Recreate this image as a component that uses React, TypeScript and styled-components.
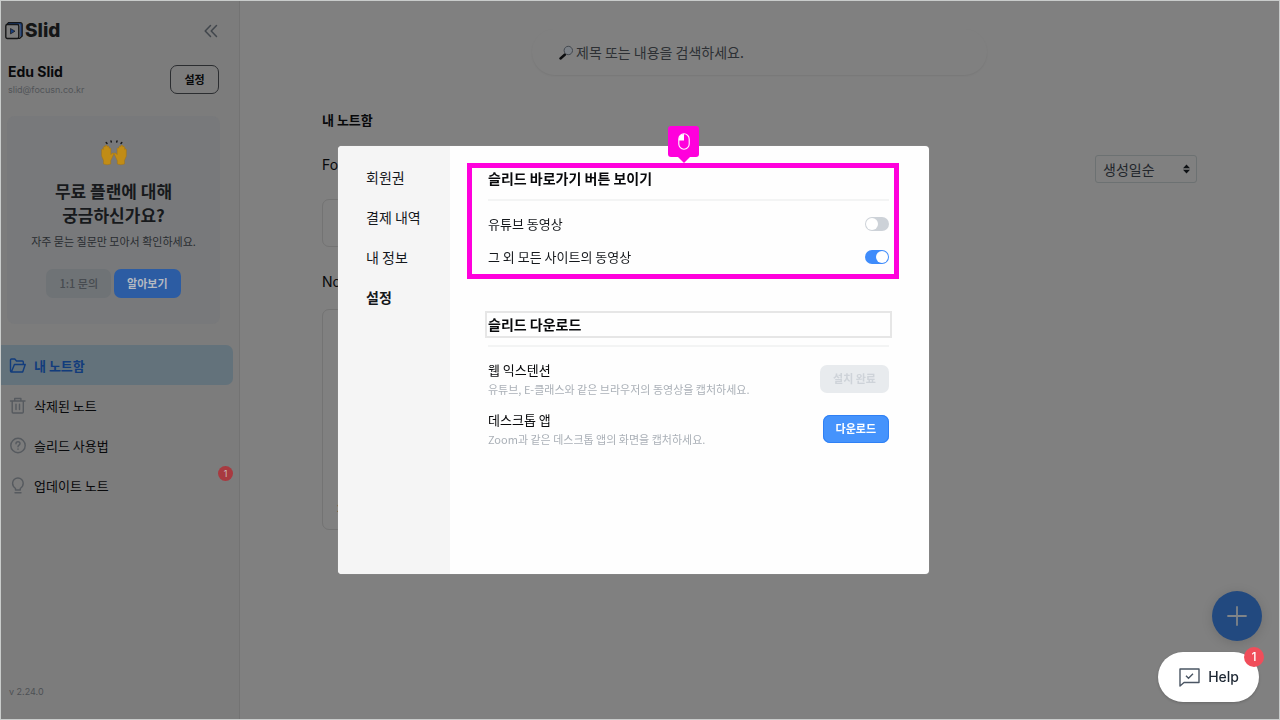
import React from "react";
import styled, { createGlobalStyle, css } from "styled-components";

const latin = `Inter, "Noto Sans CJK KR", sans-serif`;
const korean = `"Noto Sans CJK KR", Inter, sans-serif`;

const GlobalStyle = createGlobalStyle`
  *, *::before, *::after { box-sizing: border-box; }
  body { margin: 0; font-family: ${korean}; color: #08090b; background: #808080; }
  button, input, select { font-family: inherit; margin: 0; }
  button { cursor: pointer; }
  h1, h2, h3, p, ul { margin: 0; padding: 0; }
  ul { list-style: none; }
  a { color: inherit; text-decoration: none; }
  svg { display: block; flex: none; }
`;

const Page = styled.div`
  display: flex;
  min-height: 100vh;
  border: 1px solid #c9cccb;
  background: #808080;
`;

const Sidebar = styled.aside`
  display: flex;
  flex-direction: column;
  flex: none;
  width: 239px;
  background: #7c7c7c;
  border-right: 1px solid #737373;
`;

const BrandRow = styled.header`
  display: flex;
  align-items: center;
  justify-content: space-between;
  padding: 18px 21px 0 4px;
  height: 42px;
`;

const Brand = styled.a`
  display: flex;
  align-items: center;
  gap: 2px;
  font: 800 19px/24px ${latin};
  color: #151617;
`;

const IconButton = styled.button`
  display: flex;
  padding: 0;
  border: 0;
  background: none;
`;

const Profile = styled.section`
  display: flex;
  align-items: center;
  justify-content: space-between;
  padding: 19px 20px 0 7px;
`;

const ProfileName = styled.h2`
  font: 700 14px/20px ${latin};
`;

const ProfileMail = styled.p`
  font: 400 9px/15px ${latin};
  color: #515458;
`;

const SettingsButton = styled.button`
  width: 49px;
  height: 29px;
  padding: 0 0 2px;
  border: 1px solid #2b2d30;
  border-radius: 7px;
  background: none;
  color: #08090b;
  font-size: 11px;
  font-weight: 700;
`;

const Promo = styled.section`
  display: flex;
  flex-direction: column;
  align-items: center;
  margin: 19px 19px 0 6px;
  padding: 24px 0 26px;
  border-radius: 8px;
  background: #78797b;
`;

const PromoTitle = styled.h2`
  margin-top: 13px;
  font-size: 17px;
  font-weight: 700;
  line-height: 24px;
  text-align: center;
  color: #17191c;
`;

const PromoText = styled.p`
  margin-top: 4px;
  font-size: 11px;
  line-height: 20px;
  color: #292c30;
`;

const PromoActions = styled.div`
  display: flex;
  gap: 3px;
  margin-top: 18px;
`;

const PromoButton = styled.button<{ $primary?: boolean }>`
  height: 29px;
  padding: 0 13px 2px;
  border: 0;
  border-radius: 7px;
  background: ${(p) => (p.$primary ? "#2c5ca3" : "#6f7376")};
  color: ${(p) => (p.$primary ? "#b4b9c1" : "#474b50")};
  font-size: 11px;
  font-weight: ${(p) => (p.$primary ? 700 : 500)};
`;

const SideNav = styled.ul`
  margin: 21px 6px 0 0;
`;

const SideItem = styled.li`
  position: relative;
`;

const SideLink = styled.a<{ $active?: boolean }>`
  display: flex;
  align-items: center;
  gap: 8px;
  height: 40px;
  padding-left: 8px;
  border-radius: 0 7px 7px 0;
  font-size: 13px;
  ${(p) =>
    p.$active &&
    css`
      background: #63727b;
      color: #123c7c;
      font-weight: 700;
    `}
`;

const SideIcon = styled.svg`
  width: 17px;
  height: 17px;
  fill: none;
  stroke: currentColor;
  stroke-width: 1.4;
  stroke-linecap: round;
  stroke-linejoin: round;
`;

const MutedIcon = styled(SideIcon)`
  stroke: #565a5f;
`;

const Badge = styled.span<{ $large?: boolean }>`
  position: absolute;
  display: flex;
  align-items: center;
  justify-content: center;
  border-radius: 50%;
  font-family: ${latin};
  ${(p) =>
    p.$large
      ? css`
          top: -5px;
          right: -5px;
          width: 20px;
          height: 20px;
          font-size: 12px;
          background: #f04d5a;
          color: #fff;
        `
      : css`
          top: 1px;
          right: 0;
          width: 15px;
          height: 15px;
          font-size: 9px;
          background: #a83a40;
          color: #c9bdbe;
        `}
`;

const Version = styled.p`
  margin-top: auto;
  padding: 0 8px 20px;
  font: 400 9px/14px ${latin};
  color: #4d5054;
`;

const Main = styled.main`
  flex: 1;
  min-width: 0;
  padding: 28px 82px 0;
`;

const SearchBox = styled.label`
  display: flex;
  align-items: center;
  gap: 2px;
  width: 455px;
  max-width: 100%;
  height: 46px;
  margin: 0 auto;
  padding: 0 27px;
  border-radius: 23px;
  box-shadow: 0 1px 2px rgba(0, 0, 0, 0.07);
`;

const SearchInput = styled.input`
  flex: 1;
  min-width: 0;
  padding: 0;
  border: 0;
  outline: 0;
  background: none;
  font-size: 14px;
  line-height: 20px;
  color: #2d3034;
  &::placeholder {
    color: #2d3034;
    opacity: 1;
  }
`;

const PageTitle = styled.h1`
  margin-top: 35px;
  font-size: 13px;
  font-weight: 700;
  line-height: 20px;
`;

const GroupHead = styled.div`
  display: flex;
  align-items: flex-start;
  justify-content: space-between;
  height: 28px;
  margin-top: 25px;
`;

const GroupTitle = styled.h2`
  font: 400 14px/20px ${latin};
`;

const SortField = styled.label`
  position: relative;
  display: flex;
  align-items: center;
`;

const SortSelect = styled.select`
  appearance: none;
  width: 102px;
  height: 28px;
  padding: 0 20px 0 7px;
  border: 1px solid #6c7172;
  border-radius: 3px;
  background: none;
  font-size: 14px;
  color: #22262b;
`;

const SortArrows = styled.svg`
  position: absolute;
  right: 7px;
  pointer-events: none;
`;

const Card = styled.article<{ $tall?: boolean }>`
  display: flex;
  align-items: flex-end;
  width: 190px;
  height: ${(p) => (p.$tall ? 221 : 48)}px;
  margin-top: ${(p) => (p.$tall ? 9 : 16)}px;
  padding: 14px;
  border: 1px solid #737373;
  border-radius: 7px;
  font: 400 10px/14px ${latin};
`;

const Floating = styled.div`
  position: fixed;
  right: 18px;
  bottom: 18px;
  display: flex;
  flex-direction: column;
  align-items: flex-end;
  gap: 11px;
`;

const AddButton = styled.button`
  display: flex;
  align-items: center;
  justify-content: center;
  width: 50px;
  height: 50px;
  padding: 0;
  border: 0;
  border-radius: 50%;
  background: #22497f;
  box-shadow: 0 2px 12px rgba(0, 0, 0, 0.14);
`;

const HelpButton = styled.button`
  position: relative;
  display: flex;
  align-items: center;
  gap: 8px;
  height: 50px;
  margin-right: 3px;
  padding: 0 20px 0 21px;
  border: 0;
  border-radius: 25px;
  background: #fff;
  box-shadow: 0 1px 3px rgba(0, 0, 0, 0.2);
  font: 500 14px/20px ${latin};
  color: #1d2733;
`;

const ModalLayer = styled.div`
  position: fixed;
  inset: 0;
  display: flex;
  align-items: center;
  justify-content: center;
  padding-right: 13px;
`;

const Modal = styled.div`
  display: flex;
  width: 591px;
  min-height: 428px;
  border-radius: 4px;
  background: #fefefe;
  box-shadow: 0 0 1px #b0b0b0;
`;

const ModalNav = styled.nav`
  width: 112px;
  padding: 11px 0 0 28px;
  border-radius: 4px 0 0 4px;
  background: #f5f5f5;
`;

const ModalLink = styled.a<{ $active?: boolean }>`
  display: block;
  font-size: 14px;
  line-height: 40px;
  color: #15181c;
  font-weight: ${(p) => (p.$active ? 700 : 400)};
`;

const ModalBody = styled.div`
  flex: 1;
  padding: 21px 40px 22px 38px;
`;

const Section = styled.section`
  position: relative;
`;

const SectionTitle = styled.h2`
  font-size: 14px;
  font-weight: 700;
  line-height: 22px;
  padding-bottom: 10px;
`;

const OutlinedTitle = styled.h2`
  margin: 44px -3px 7px;
  border: 2px solid #e6e6e6;
  padding: 0 0 1px 1px;
  font-size: 14px;
  font-weight: 700;
  line-height: 22px;
`;

const Rule = styled.hr`
  height: 2px;
  margin: 0 0 13px;
  border: 0;
  background: #f3f4f4;
`;

const ToggleRow = styled.label`
  display: flex;
  align-items: center;
  justify-content: space-between;
  font-size: 13px;
  line-height: 20px;
  color: #15181c;
  & + & {
    margin-top: 13px;
  }
`;

const Toggle = styled.input`
  appearance: none;
  display: flex;
  align-items: center;
  width: 24px;
  height: 14px;
  margin: 0;
  padding: 0 1px;
  border-radius: 7px;
  background: #cdd2d8;
  &::before {
    content: "";
    width: 12px;
    height: 12px;
    border-radius: 50%;
    background: #fff;
  }
  &:checked {
    justify-content: flex-end;
    background: #3f8cfb;
  }
`;

const Product = styled.div`
  display: flex;
  align-items: center;
  justify-content: space-between;
  & + & {
    margin-top: 12px;
  }
`;

const ProductName = styled.h3`
  font-size: 13px;
  font-weight: 400;
  line-height: 20px;
  color: #08090b;
`;

const ProductText = styled.p`
  font-size: 11px;
  line-height: 18px;
  color: #aab0b7;
`;

const ActionButton = styled.button`
  height: 28px;
  padding: 0 13px 2px;
  border: 0;
  border-radius: 7px;
  background: #4593fc;
  box-shadow: inset 0 0 0 1px #2f80f5;
  color: #fff;
  font-size: 11px;
  font-weight: 700;
  &:disabled {
    background: #e8ebee;
    box-shadow: none;
    color: #ced3d9;
  }
`;

const Highlight = styled.div`
  position: absolute;
  inset: -4px -10px -12px -21px;
  border: 5px solid #ff00dc;
  pointer-events: none;
`;

const ClickMarker = styled.div`
  position: absolute;
  left: 50%;
  bottom: 100%;
  display: flex;
  align-items: center;
  justify-content: center;
  width: 31px;
  height: 31px;
  margin: 0 0 11px -15px;
  border-radius: 3px;
  background: #ff00dc;
  &::after {
    content: "";
    position: absolute;
    top: 100%;
    border: 6px solid transparent;
    border-top-color: #ff00dc;
  }
`;

const SlidMark = () => (
  <svg width="18" height="18" viewBox="0 0 18 18" fill="none">
    <path d="M3 1.600h11.500q1.800 0 1.800 2v11" stroke="#1b3f7c" strokeWidth="2" />
    <rect x="0.800" y="2.500" width="13" height="14" rx="1.500" stroke="#151617" strokeWidth="1.400" />
    <path d="M1.800 2.500L3.500 0.700h11.700q2 0 2 2v11.200l-2.500 2.600H12" stroke="#151617" strokeWidth="1.200" />
    <path d="M5.500 6.500v5.400L10 9.200z" fill="#1b3f7c" stroke="#151617" strokeWidth="0.700" />
  </svg>
);

const RaisedHands = () => (
  <svg width="26" height="26" viewBox="0 1 26 26">
    <path
      d="M6 4.500l-.8-1M10.300 3l-.3-1M15.700 3l.3-1M20 4.500l.8-1"
      stroke="#1a1b1d"
      strokeWidth="1.500"
      strokeLinecap="round"
    />
    <g fill="#c18c16" stroke="#a06f0e" strokeWidth="0.400" strokeLinejoin="round">
      <path d="M2.500 25v-3.500L.6 17v-6.500q.8-1.300 1.700 0V8q.8-1.300 1.800 0V6.700q.9-1.300 2 0v.8q1-1.200 2 .2v1.500q1.200-.9 1.800.4v5.900l1.100-1.300q1.400-.9 2 .5l-3.300 7V25q-3.500 1.500-7.200 0z" />
      <path d="M23.500 25v-3.500l1.900-4.500v-6.500q-.8-1.300-1.700 0V8q-.8-1.300-1.800 0V6.700q-.9-1.300-2 0v.8q-1-1.200-2 .2v1.500q-1.200-.9-1.800.4v5.900L15 14.200q-1.400-.9-2 .5l3.300 7V25q3.500 1.500 7.200 0z" />
    </g>
  </svg>
);

const sideItems = [
  {
    label: "내 노트함",
    active: true,
    icon: (
      <SideIcon viewBox="0 0 17 17">
        <path d="M3 15H2.300Q1.500 15 1.500 14V3q0-1 1-1h3.300l1.700 2h5.800q1 0 1 1v2.200M3 15h10.700l2.500-7.500H5.400L2.500 14.800" />
      </SideIcon>
    ),
  },
  {
    label: "삭제된 노트",
    icon: (
      <MutedIcon viewBox="0 0 17 17">
        <path d="M1.500 4h14.500M3.200 4v11q0 1 1 1h9.100q1 0 1-1V4M5.700 4V1.500h6.200V4M7 7.300v5.200M10.500 7.300v5.200" />
      </MutedIcon>
    ),
  },
  {
    label: "슬리드 사용법",
    icon: (
      <MutedIcon viewBox="0 0 17 17">
        <circle cx="9" cy="8.500" r="7.200" />
        <path d="M7 6.700q0-2 2-2t2 1.800q0 1-1 1.600t-1 1.700M9 12v.2" />
      </MutedIcon>
    ),
  },
  {
    label: "업데이트 노트",
    badge: 1,
    icon: (
      <MutedIcon viewBox="0 0 17 17">
        <path d="M6.500 13v-1.500Q3.600 9.500 3.600 6.300a5.300 5.300 0 0 1 10.600 0Q14.200 9.500 11.300 11.500V13zM6 15.800h6" />
      </MutedIcon>
    ),
  },
];

const modalItems = ["회원권", "결제 내역", "내 정보", "설정"];

export default function App() {
  return (
    <>
      <GlobalStyle />
      <Page>
        <Sidebar>
          <BrandRow>
            <Brand href="#">
              <SlidMark />
              Slid
            </Brand>
            <IconButton aria-label="메뉴 접기">
              <svg width="14" height="14" viewBox="0 0 14 14" fill="none" stroke="#41464c" strokeWidth="1.500" strokeLinecap="round" strokeLinejoin="round">
                <path d="M6.500 1.500L1.200 7l5.300 5.500M12.500 1.500L7.200 7l5.300 5.500" />
              </svg>
            </IconButton>
          </BrandRow>
          <Profile>
            <div>
              <ProfileName>Edu Slid</ProfileName>
              <ProfileMail>slid@focusn.co.kr</ProfileMail>
            </div>
            <SettingsButton>설정</SettingsButton>
          </Profile>
          <Promo>
            <RaisedHands />
            <PromoTitle>
              무료 플랜에 대해
              <br />
              궁금하신가요?
            </PromoTitle>
            <PromoText>자주 묻는 질문만 모아서 확인하세요.</PromoText>
            <PromoActions>
              <PromoButton>1:1 문의</PromoButton>
              <PromoButton $primary>알아보기</PromoButton>
            </PromoActions>
          </Promo>
          <SideNav>
            {sideItems.map((item) => (
              <SideItem key={item.label}>
                <SideLink href="#" $active={item.active}>
                  {item.icon}
                  {item.label}
                </SideLink>
                {item.badge && <Badge>{item.badge}</Badge>}
              </SideItem>
            ))}
          </SideNav>
          <Version>v 2.24.0</Version>
        </Sidebar>

        <Main>
          <SearchBox>
            <svg width="15" height="15" viewBox="0 0 15 15" fill="none" role="img" aria-label="검색">
              <path d="M1.500 13.500l4.500-4" stroke="#0c0d0f" strokeWidth="2.400" strokeLinecap="round" />
              <circle cx="9.300" cy="5.500" r="4.200" fill="#7b8086" stroke="#43484f" strokeWidth="1" />
            </svg>
            <SearchInput type="search" placeholder="제목 또는 내용을 검색하세요." />
          </SearchBox>
          <PageTitle>내 노트함</PageTitle>
          <GroupHead>
            <GroupTitle>Folders</GroupTitle>
            <SortField>
              <SortSelect aria-label="정렬" defaultValue="생성일순">
                <option>생성일순</option>
              </SortSelect>
              <SortArrows width="7" height="10" viewBox="0 0 7 10" fill="#0e1114">
                <path d="M3.500 0.500L7 4.300H0zM3.500 9.500L7 5.700H0z" />
              </SortArrows>
            </SortField>
          </GroupHead>
          <Card />
          <GroupHead>
            <GroupTitle>Notes</GroupTitle>
          </GroupHead>
          <Card $tall>2021.10</Card>
        </Main>
      </Page>

      <ModalLayer>
        <Modal role="dialog" aria-label="설정">
          <ModalNav>
            {modalItems.map((label) => (
              <ModalLink key={label} href="#" $active={label === "설정"}>
                {label}
              </ModalLink>
            ))}
          </ModalNav>
          <ModalBody>
            <Section>
              <SectionTitle>슬리드 바로가기 버튼 보이기</SectionTitle>
              <Rule />
              <ToggleRow>
                유튜브 동영상
                <Toggle type="checkbox" />
              </ToggleRow>
              <ToggleRow>
                그 외 모든 사이트의 동영상
                <Toggle type="checkbox" defaultChecked />
              </ToggleRow>
              <Highlight>
                <ClickMarker>
                  <svg width="12" height="17" viewBox="0 0 12 17" fill="none" stroke="#fff" strokeWidth="1.100">
                    <rect x="0.800" y="0.800" width="10.400" height="15.400" rx="5.200" />
                    <path d="M6 1v6.500H1V6q0-4.500 5-5z" fill="#fff" stroke="none" />
                  </svg>
                </ClickMarker>
              </Highlight>
            </Section>
            <Section>
              <OutlinedTitle>슬리드 다운로드</OutlinedTitle>
              <Rule />
              <Product>
                <div>
                  <ProductName>웹 익스텐션</ProductName>
                  <ProductText>유튜브, E-클래스와 같은 브라우저의 동영상을 캡처하세요.</ProductText>
                </div>
                <ActionButton disabled>설치 완료</ActionButton>
              </Product>
              <Product>
                <div>
                  <ProductName>데스크톱 앱</ProductName>
                  <ProductText>Zoom과 같은 데스크톱 앱의 화면을 캡처하세요.</ProductText>
                </div>
                <ActionButton>다운로드</ActionButton>
              </Product>
            </Section>
          </ModalBody>
        </Modal>
      </ModalLayer>

      <Floating>
        <AddButton aria-label="새 노트">
          <svg width="20" height="20" viewBox="0 0 20 20" stroke="#808488" strokeWidth="1.800" strokeLinecap="round">
            <path d="M10 1v18M1 10h18" />
          </svg>
        </AddButton>
        <HelpButton>
          <svg width="21" height="19" viewBox="0 0 21 19" fill="none" stroke="#4a5563" strokeWidth="1.400">
            <path d="M1 18V1h19v13.500H5z" strokeLinejoin="round" />
            <path d="M7 7.800l2.500 2.500L14 5.800" />
          </svg>
          Help
          <Badge $large>1</Badge>
        </HelpButton>
      </Floating>
    </>
  );
}
